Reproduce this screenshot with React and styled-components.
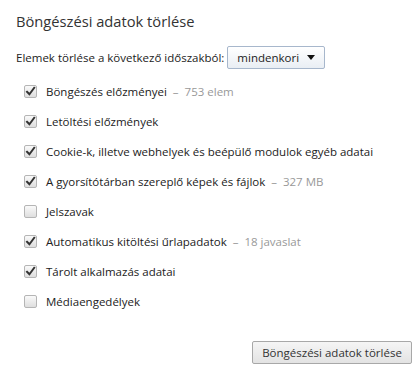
import React from "react";
import styled, { createGlobalStyle } from "styled-components";

const Global = createGlobalStyle`
  html, body { margin: 0; padding: 0; background: #fff; }
  body { font-family: "Open Sans", "Noto Sans", sans-serif; color: #333; }
`;

const Page = styled.div`
  width: 415px;
  height: 369px;
  box-sizing: border-box;
  padding: 11px 3px 0 16px;
  display: flex;
  flex-direction: column;
`;

const Title = styled.h1`
  margin: 0;
  font-size: 14.7px;
  font-weight: 400;
  color: #333;
  line-height: 20px;
`;

const PeriodRow = styled.div`
  margin-top: 15px;
  display: flex;
  align-items: center;
  gap: 3px;
  font-size: 11.5px;
  color: #222;
`;

const Select = styled.div`
  width: 98px;
  height: 23px;
  box-sizing: border-box;
  border: 1px solid #a7b7cc;
  border-radius: 2px;
  background: linear-gradient(#ffffff, #e9eef4);
  display: flex;
  align-items: center;
  justify-content: space-between;
  padding: 0 9px 0 9px;
  font-size: 11.5px;
  color: #222;
`;

const Arrow = styled.span`
  width: 0;
  height: 0;
  border-left: 4.5px solid transparent;
  border-right: 4.5px solid transparent;
  border-top: 5px solid #111;
`;

const List = styled.div`
  margin-top: 7px;
  padding-left: 8px;
  display: flex;
  flex-direction: column;
`;

const Row = styled.label`
  height: 30px;
  display: flex;
  align-items: center;
  gap: 9px;
  font-size: 11.5px;
  color: #222;
`;

const Box = styled.span`
  width: 13px;
  height: 13px;
  box-sizing: border-box;
  border: 1px solid #b5b5b5;
  border-radius: 2px;
  background: linear-gradient(#fafafa, #dedede);
  display: flex;
  align-items: center;
  justify-content: center;
  flex: none;
`;

const Extra = styled.span`
  color: #999;
`;

const Footer = styled.div`
  margin-top: auto;
  margin-bottom: 5px;
  display: flex;
  justify-content: flex-end;
`;

const Button = styled.button`
  width: 160px;
  height: 23px;
  border: 1px solid #a8a8a8;
  border-radius: 2px;
  background: linear-gradient(#f5f5f5, #e3e3e3);
  font-family: inherit;
  font-size: 11.5px;
  color: #333;
  padding: 0;
`;

const Check = () => (
  <svg width="11" height="11" viewBox="0 0 11 11">
    <path d="M2 5.8 L4.4 8.3 L9.2 1.8" fill="none" stroke="#333" strokeWidth="2" strokeLinecap="square" />
  </svg>
);

const items = [
  { label: "Böngészés előzményei", extra: "753 elem", checked: true },
  { label: "Letöltési előzmények", checked: true },
  { label: "Cookie-k, illetve webhelyek és beépülő modulok egyéb adatai", checked: true },
  { label: "A gyorsítótárban szereplő képek és fájlok", extra: "327 MB", checked: true },
  { label: "Jelszavak", checked: false },
  { label: "Automatikus kitöltési űrlapadatok", extra: "18 javaslat", checked: true },
  { label: "Tárolt alkalmazás adatai", checked: true },
  { label: "Médiaengedélyek", checked: false },
];

export default function App() {
  return (
    <>
      <Global />
      <Page>
        <Title>Böngészési adatok törlése</Title>
        <PeriodRow>
          <span>Elemek törlése a következő időszakból:</span>
          <Select>
            <span>mindenkori</span>
            <Arrow />
          </Select>
        </PeriodRow>
        <List>
          {items.map((it) => (
            <Row key={it.label}>
              <Box>{it.checked && <Check />}</Box>
              <span>
                {it.label}
                {it.extra && <Extra>&nbsp; –&nbsp; {it.extra}</Extra>}
              </span>
            </Row>
          ))}
        </List>
        <Footer>
          <Button>Böngészési adatok törlése</Button>
        </Footer>
      </Page>
    </>
  );
}
